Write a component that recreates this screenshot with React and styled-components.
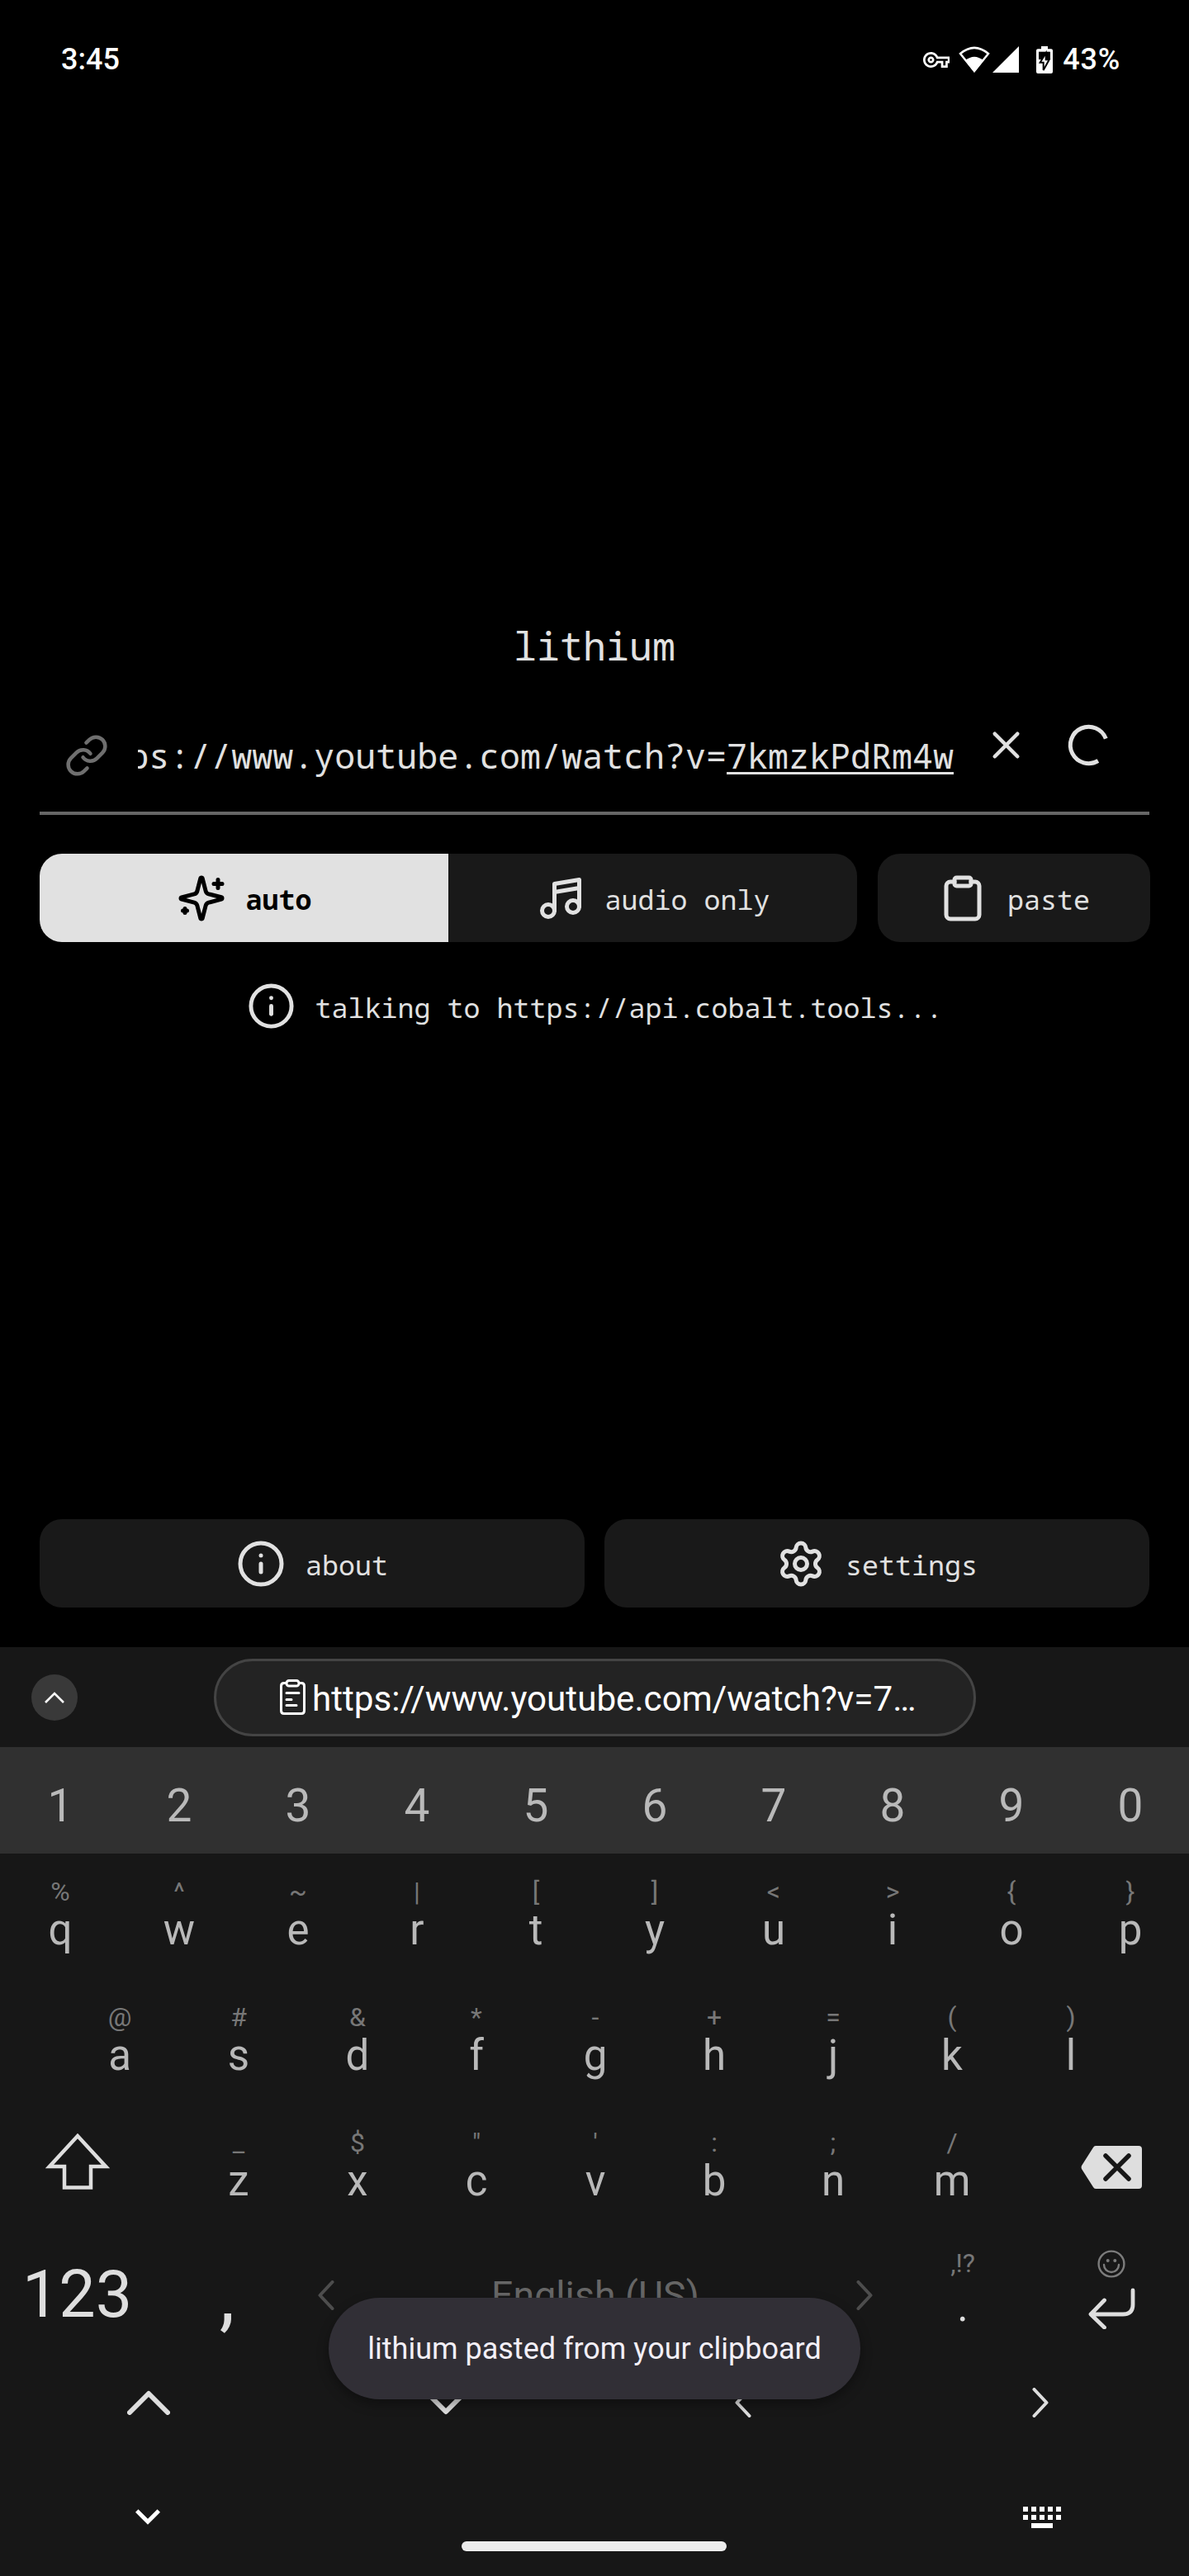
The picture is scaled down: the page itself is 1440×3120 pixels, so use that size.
import React from "react";
import styled, { createGlobalStyle, css } from "styled-components";
import { Link, X, Music4, Clipboard, Info, Settings } from "lucide-react";

const GlobalStyle = createGlobalStyle`
  * { box-sizing: border-box; }
  body { margin: 0; background: #000; }
  svg { display: block; flex: none; }
`;

const mono = `"Noto Sans Mono", "Liberation Mono", monospace`;
const sans = `Roboto, "Liberation Sans", sans-serif`;

const Screen = styled.div`
  position: relative;
  width: 1440px;
  height: 3120px;
  background: #000;
  overflow: hidden;
  white-space: nowrap;
`;

/* ---------- app ---------- */

const AppArea = styled.main`
  display: flex;
  flex-direction: column;
  height: 1995px;
  padding: 0 48px 48px;
  color: #e1e1e1;
  font-family: ${mono};
  font-size: 33.33px;
`;

const StatusBar = styled.header`
  display: flex;
  align-items: center;
  height: 144px;
  padding: 0 35px 0 26px;
  color: #fff;
  font: 500 36px/1 ${sans};
`;

const StatusIcons = styled.div`
  display: flex;
  align-items: center;
  margin-left: auto;
`;

const Battery = styled.span`
  margin-left: 12px;
  letter-spacing: 0.8px;
`;

const Gap = styled.i`
  width: ${(p) => p.$w}px;
`;

const Title = styled.h1`
  margin: 608px 0 0;
  font-size: 46.67px;
  font-weight: 400;
  line-height: 60px;
  text-align: center;
`;

const UrlField = styled.div`
  display: flex;
  align-items: center;
  height: 175px;
  padding: 34px 0 0 30px;
  border-bottom: 4px solid #666;
`;

const UrlText = styled.div`
  display: flex;
  justify-content: flex-end;
  width: 988px;
  margin-left: 35px;
  overflow: hidden;
  font-size: 41.67px;
  line-height: 60px;
`;

const Composing = styled.u`
  text-decoration-thickness: 3px;
  text-underline-offset: 4px;
  text-decoration-skip-ink: none;
`;

const FieldActions = styled.div`
  display: flex;
  gap: 45px;
  margin: 0 0 25px 36px;
`;

const ModeRow = styled.div`
  display: flex;
  gap: 25px;
  width: 1345px;
  margin-top: 47px;
`;

const Segments = styled.div`
  display: flex;
  border-radius: 27px;
  overflow: hidden;
`;

const buttonBase = css`
  display: flex;
  align-items: center;
  justify-content: center;
  gap: 24px;
  height: 107px;
  border: 0;
  padding: 0;
  background: #191919;
  color: #e1e1e1;
  font: 400 33.33px/60px ${mono};
`;

const Segment = styled.button`
  ${buttonBase}
  width: 495px;
  ${(p) => p.$active && css`
    background: #e1e1e1;
    color: #000;
    font-weight: 700;
  `}
`;

const Button = styled.button`
  ${buttonBase}
  flex: 1;
  border-radius: 27px;
`;

const Label = styled.span`
  padding-top: 3px;
`;

const StatusLine = styled.div`
  display: flex;
  align-items: center;
  justify-content: center;
  gap: 24px;
  height: 60px;
  margin-top: 47px;
`;

const BottomRow = styled.div`
  display: flex;
  gap: 24px;
  margin-top: auto;
`;

/* ---------- keyboard ---------- */

const Keyboard = styled.section`
  height: 1125px;
  background: #171717;
  color: #b9b9b9;
  font-family: ${sans};
`;

const SuggestionBar = styled.div`
  display: flex;
  align-items: center;
  height: 121px;
  padding-left: 38px;
`;

const ExpandButton = styled.div`
  display: flex;
  align-items: center;
  justify-content: center;
  width: 56px;
  height: 56px;
  border-radius: 50%;
  background: #393939;
`;

const Suggestion = styled.div`
  display: flex;
  align-items: center;
  width: 923px;
  height: 94px;
  margin-left: 165px;
  padding-left: 77px;
  gap: 8px;
  border: 3px solid #444;
  border-radius: 47px;
  background: #232323;
  color: #fff;
  font-size: 42.2px;
`;

const NumberRow = styled.div`
  display: flex;
  height: 129px;
  padding: 13px 0 0 1px;
  background: #303030;
`;

const NumberKey = styled.div`
  flex: 0 0 144px;
  font-size: 55px;
  line-height: 116px;
  text-align: center;
`;

const KeyRow = styled.div`
  display: flex;
  height: 152px;
  padding-left: ${(p) => p.$indent || 0}px;
`;

const KeyBox = styled.div`
  flex: 0 0 144px;
  display: flex;
  flex-direction: column;
  align-items: center;
  gap: ${(p) => (p.$raisedHint ? 6 : 0)}px;
  padding-top: ${(p) => (p.$raisedHint ? 20 : 26)}px;
`;

const Hint = styled.span`
  height: 40px;
  color: #777;
  font-size: 32px;
  line-height: 40px;
`;

const Letter = styled.span`
  font-size: 51px;
  line-height: 54px;
  color: ${(p) => p.$color || "inherit"};
`;

const IconKey = styled.div`
  display: flex;
  justify-content: ${(p) => (p.$end ? "flex-end" : "flex-start")};
  width: ${(p) => p.$w}px;
  padding: ${(p) => p.$pad};
`;

const ModeKey = styled.div`
  width: 187px;
  padding-top: 4px;
  color: #dedede;
  font-size: 79px;
  line-height: 148px;
  text-align: center;
`;

const CommaKey = styled.div`
  width: 173px;
  padding: 5px 0 0 3px;
  color: #dedede;
  font-size: 94px;
  line-height: 148px;
  text-align: center;
`;

const SpaceKey = styled.div`
  display: flex;
  align-items: center;
  justify-content: space-between;
  width: 734px;
  padding: 6px 37px 0 25px;
  color: #666;
  font-size: 46.5px;
`;

const EnterKey = styled.div`
  display: flex;
  flex-direction: column;
  align-items: center;
  width: 202px;
  padding: 24px 0 0 14px;
  gap: 12px;
`;

const ArrowRow = styled.div`
  display: flex;
  height: 114px;
`;

const ArrowKey = styled.div`
  flex: 1;
  display: flex;
  align-items: center;
  justify-content: center;
`;

const NavIcons = styled.div`
  display: flex;
  align-items: center;
  justify-content: space-between;
  height: 111px;
  padding: 52px 155px 0 164px;
`;

const HomeBar = styled.div`
  width: 321px;
  height: 12px;
  margin-left: 559px;
  border-radius: 6px;
  background: #ececec;
`;

const Toast = styled.div`
  position: absolute;
  left: 398px;
  top: 2783px;
  display: flex;
  align-items: center;
  justify-content: center;
  width: 644px;
  height: 123px;
  border-radius: 62px;
  background: #312f36;
  box-shadow: 0 6px 14px rgba(0, 0, 0, 0.35);
  color: #f3eff7;
  font: 400 36px/1 ${sans};
`;

/* ---------- drawings ---------- */

const SparklesIcon = () => (
  <svg width="60" height="60" viewBox="0 0 24 24" fill="none" stroke="currentColor" strokeWidth="2" strokeLinecap="round" strokeLinejoin="round">
    <path d="M9.937 15.5A2 2 0 0 0 8.5 14.063l-6.135-1.582a.5.5 0 0 1 0-.962L8.5 9.936A2 2 0 0 0 9.937 8.5l1.582-6.135a.5.5 0 0 1 .963 0L14.063 8.5A2 2 0 0 0 15.5 9.937l6.135 1.581a.5.5 0 0 1 0 .964L15.5 14.063a2 2 0 0 0-1.437 1.437l-1.582 6.135a.5.5 0 0 1-.963 0z" />
    <path d="M20 3v4M22 5h-4M4 17v2M5 18H3" />
  </svg>
);

const SpinnerIcon = () => (
  <svg width="55" height="55" viewBox="-27.5 -27.5 55 55" fill="none" stroke="currentColor" strokeWidth="5">
    <path d="M20.8 -7.8A22.2 22.2 0 1 0 11.4 19" />
  </svg>
);

const KeyIcon = () => (
  <svg width="32.5" height="19" viewBox="0 5 24 14" fill="#fff">
    <path d="M22 19h-6v-4h-2.68c-1.14 2.42-3.6 4-6.32 4-3.86 0-7-3.14-7-7s3.14-7 7-7c2.72 0 5.17 1.58 6.32 4H24v6h-2v4zm-4-2h2v-4h2v-2H11.94l-.23-.67C11.01 8.34 9.11 7 7 7c-2.76 0-5 2.24-5 5s2.24 5 5 5c2.11 0 4.01-1.34 4.71-3.33l.23-.67H18v4zM7 15c-1.65 0-3-1.35-3-3s1.35-3 3-3 3 1.35 3 3-1.35 3-3 3zm0-4c-.55 0-1 .45-1 1s.45 1 1 1 1-.45 1-1-.45-1-1-1z" />
  </svg>
);

const WifiIcon = () => (
  <svg width="38" height="32" viewBox="183 47 114 96">
    <path d="M189 74Q240 31 291 74L240 137Z" fill="none" stroke="#fff" strokeWidth="7.5" />
    <path d="M207 99Q240 72 273 99L240 142Z" fill="#fff" />
  </svg>
);

const SignalIcon = () => (
  <svg width="32" height="32" viewBox="0 0 32 32">
    <path d="M0 32L32 0V32Z" fill="#fff" />
  </svg>
);

const BatteryIcon = () => (
  <svg width="20" height="33" viewBox="465 45 60 99">
    <path d="M483 45h24v10h12q6 0 6 6v77q0 6-6 6h-48q-6 0-6-6V61q0-6 6-6h12z" fill="#fff" />
    <path d="M474 65h42v28h-42z" fill="#000" />
    <path d="M500 70L479 104H491V132L512 94H500Z" fill="#fff" stroke="#000" strokeWidth="6" />
  </svg>
);

const Stroke = ({ w, h, sw, color = "#dedede", d, cap = "round", join = "round" }) => (
  <svg width={w} height={h} viewBox={`0 0 ${w} ${h}`} fill="none" stroke={color} strokeWidth={sw} strokeLinecap={cap} strokeLinejoin={join}>
    <path d={d} />
  </svg>
);

const ChevronLeft = ({ color }) => <Stroke w={20} h={36} sw={4} color={color} d="M17.5 2L2.5 18L17.5 34" />;
const ChevronRight = ({ color }) => <Stroke w={20} h={36} sw={4} color={color} d="M2.5 2L17.5 18L2.5 34" />;

const ClipNoteIcon = () => (
  <svg width="31" height="43" viewBox="0 0 31 43" fill="none" stroke="#fff" strokeWidth="3" strokeLinecap="round">
    <path d="M7 4.5H5Q1.5 4.5 1.5 8V38Q1.5 41.5 5 41.5H26Q29.5 41.5 29.5 38V8Q29.5 4.5 26 4.5H24" />
    <rect x="8" y="1.5" width="15" height="6.5" rx="3" />
    <path d="M8 16.5H23M8 24.5H14M8 31.5H20" />
  </svg>
);

const ShiftIcon = () => (
  <Stroke w={78} h={70} sw={4.5} cap="butt" join="miter" d="M39 4L73 41H55V66.5H23V41H5Z" />
);

const BackspaceIcon = () => (
  <svg width="74" height="52" viewBox="0 0 74 52">
    <path d="M18 0H70Q74 0 74 4V48Q74 52 70 52H18Q16 52 15 50L1 28Q0 26 1 24L15 2Q16 0 18 0Z" fill="#dedede" />
    <path d="M30 12L58 40M58 12L30 40" stroke="#171717" strokeWidth="5.5" strokeLinecap="round" />
  </svg>
);

const SmileyIcon = () => (
  <svg width="34" height="34" viewBox="-17 -17 34 34" fill="none" stroke="#7c7c7c" strokeWidth="2.4" strokeLinecap="round">
    <circle r="15.4" />
    <path d="M-9 1A9 9 0 0 0 9 1" />
    <circle cx="-4.3" cy="-4" r="2" fill="#7c7c7c" stroke="none" />
    <circle cx="4.3" cy="-4" r="2" fill="#7c7c7c" stroke="none" />
  </svg>
);

const EnterIcon = () => <Stroke w={57} h={50} sw={4.8} d="M54 3V20Q54 32 42 32H3M19.5 15L3 32L19.5 48" />;

const KeyboardIcon = () => (
  <svg width="46" height="26" viewBox="0 0 46 26" fill="#fff">
    {[0, 1].map((r) => [0, 1, 2, 3, 4].map((c) => <rect key={`${r}${c}`} x={c * 10} y={r * 10} width="6" height="6" />))}
    <rect x="10" y="20" width="26" height="6" />
  </svg>
);

/* ---------- data ---------- */

const row1 = [["%", "q"], ["^", "w"], ["~", "e"], ["|", "r"], ["[", "t"], ["]", "y"], ["<", "u"], [">", "i"], ["{", "o"], ["}", "p"]];
const row2 = [["@", "a"], ["#", "s"], ["&", "d"], ["*", "f"], ["-", "g"], ["+", "h"], ["=", "j"], ["(", "k"], [")", "l"]];
const row3 = [["_", "z"], ["$", "x"], ['"', "c"], ["'", "v"], [":", "b"], [";", "n"], ["/", "m"]];

const Key = ({ hint, letter }) => (
  <KeyBox>
    <Hint>{hint}</Hint>
    <Letter>{letter}</Letter>
  </KeyBox>
);

const keys = (row) => row.map(([h, l]) => <Key key={l} hint={h} letter={l} />);

export default function App() {
  return (
    <Screen>
      <GlobalStyle />
      <AppArea>
        <StatusBar>
          <span>3:45</span>
          <StatusIcons>
            <KeyIcon />
            <Gap $w={11} />
            <WifiIcon />
            <Gap $w={3} />
            <SignalIcon />
            <Gap $w={21} />
            <BatteryIcon />
            <Battery>43%</Battery>
          </StatusIcons>
        </StatusBar>

        <Title>lithium</Title>
        <UrlField>
          <Link size={54} color="#6f6f6f" />
          <UrlText>
            <span>https://www.youtube.com/watch?v=<Composing>7kmzkPdRm4w</Composing></span>
          </UrlText>
          <FieldActions>
            <X size={55} />
            <SpinnerIcon />
          </FieldActions>
        </UrlField>

        <ModeRow>
          <Segments>
            <Segment $active><SparklesIcon /><Label>auto</Label></Segment>
            <Segment><Music4 size={60} /><Label>audio only</Label></Segment>
          </Segments>
          <Button><Clipboard size={60} /><Label>paste</Label></Button>
        </ModeRow>

        <StatusLine>
          <Info size={59} />
          <Label>talking to https://api.cobalt.tools...</Label>
        </StatusLine>

        <BottomRow>
          <Button><Info size={60} /><Label>about</Label></Button>
          <Button><Settings size={60} /><Label>settings</Label></Button>
        </BottomRow>
      </AppArea>

      <Keyboard>
        <SuggestionBar>
          <ExpandButton>
            <Stroke w={24} h={14} sw={2.6} color="#fff" cap="butt" join="miter" d="M1 13L12 2L23 13" />
          </ExpandButton>
          <Suggestion>
            <ClipNoteIcon />
            <Label>https://www.youtube.com/watch?v=7…</Label>
          </Suggestion>
        </SuggestionBar>

        <NumberRow>
          {[..."1234567890"].map((n) => <NumberKey key={n}>{n}</NumberKey>)}
        </NumberRow>

        <KeyRow $indent={1}>{keys(row1)}</KeyRow>
        <KeyRow $indent={73}>{keys(row2)}</KeyRow>
        <KeyRow>
          <IconKey $w={217} $pad="34px 0 0 55px"><ShiftIcon /></IconKey>
          {keys(row3)}
          <IconKey $w={215} $end $pad="50px 57px 0 0"><BackspaceIcon /></IconKey>
        </KeyRow>
        <KeyRow>
          <ModeKey>123</ModeKey>
          <CommaKey>,</CommaKey>
          <SpaceKey>
            <ChevronLeft color="#4d4d4d" />
            <span>English (US)</span>
            <ChevronRight color="#4d4d4d" />
          </SpaceKey>
          <KeyBox $raisedHint>
            <Hint>,!?</Hint>
            <Letter $color="#dedede">.</Letter>
          </KeyBox>
          <EnterKey><SmileyIcon /><EnterIcon /></EnterKey>
        </KeyRow>
        <ArrowRow>
          <ArrowKey><Stroke w={52} h={30} sw={6} d="M3 27L26 4L49 27" /></ArrowKey>
          <ArrowKey><Stroke w={52} h={30} sw={6} d="M3 3L26 26L49 3" /></ArrowKey>
          <ArrowKey><ChevronLeft /></ArrowKey>
          <ArrowKey><ChevronRight /></ArrowKey>
        </ArrowRow>
        <NavIcons>
          <Stroke w={30} h={19} sw={5} color="#fff" cap="butt" join="miter" d="M1.7 2L15 15.3L28.3 2" />
          <KeyboardIcon />
        </NavIcons>
        <HomeBar />
      </Keyboard>

      <Toast>lithium pasted from your clipboard</Toast>
    </Screen>
  );
}
